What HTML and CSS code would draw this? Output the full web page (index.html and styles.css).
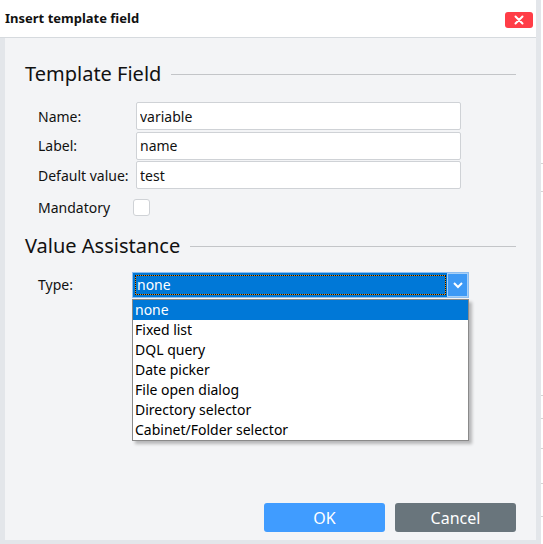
FILE: index.html
```html
<!DOCTYPE html>
<html lang="en">
<head>
    <meta charset="UTF-8">
    <title>Insert template field</title>
    <link rel="stylesheet" href="styles.css">
</head>
<body>
    <div class="dialog">
        <div class="titlebar">
            <span class="title">Insert template field</span>
            <button class="close" type="button">
                <svg width="10" height="10" viewBox="0 0 10 10">
                    <path d="M1.5 1.5 L8.5 8.5 M8.5 1.5 L1.5 8.5" stroke="#fff" stroke-width="2" stroke-linecap="round"/>
                </svg>
            </button>
        </div>
        <div class="frame">
            <div class="panel">
                <div class="section-head">
                    <h2>Template Field</h2>
                    <span class="rule"></span>
                </div>
                <div class="fields">
                    <label for="name">Name:</label>
                    <input id="name" class="input-field" type="text" value="variable">
                    <label for="label">Label:</label>
                    <input id="label" class="input-field" type="text" value="name">
                    <label for="default">Default value:</label>
                    <input id="default" class="input-field" type="text" value="test">
                    <label for="mandatory" class="check-label">Mandatory</label>
                    <span class="checkbox" id="mandatory"></span>
                </div>

                <div class="section-head second">
                    <h2>Value Assistance</h2>
                    <span class="rule"></span>
                </div>
                <div class="type-row">
                    <span class="type-label">Type:</span>
                    <div class="combo">
                        <div class="combo-field">
                            <div class="focus-ring"><span>none</span></div>
                        </div>
                        <div class="combo-button">
                            <svg width="12" height="8" viewBox="0 0 12 8">
                                <path d="M2 2 L6 6 L10 2" fill="none" stroke="#fff" stroke-width="2"/>
                            </svg>
                        </div>
                        <ul class="combo-list">
                            <li class="selected">none</li>
                            <li>Fixed list</li>
                            <li>DQL query</li>
                            <li>Date picker</li>
                            <li>File open dialog</li>
                            <li>Directory selector</li>
                            <li>Cabinet/Folder selector</li>
                        </ul>
                    </div>
                </div>

                <div class="actions">
                    <button type="button" class="button ok">OK</button>
                    <button type="button" class="button cancel">Cancel</button>
                </div>
            </div>
        </div>
    </div>
    <div class="behind">
        <span style="top: 163px"></span>
        <span style="top: 191px"></span>
        <span style="top: 395px"></span>
        <span style="top: 418px"></span>
        <span style="top: 448px"></span>
        <span style="top: 483px"></span>
        <span style="top: 516px"></span>
    </div>
</body>
</html>
```

FILE: styles.css
```css
body {
    margin: 0;
    display: flex;
    background-color: #fff;
    font-family: 'Noto Sans', 'Open Sans', sans-serif;
    color: #111;
    overflow: hidden;
}
.dialog {
    width: 536px;
    height: 540px;
    padding: 0 5px 4px 0;
    background-color: #e3e6ea; /* frame colour */
    display: flex;
    flex-direction: column;
}
.titlebar {
    height: 37px;
    background-color: #fff;
    border-bottom: 1px solid #d6dade;
    display: flex;
    align-items: center;
    justify-content: space-between;
    padding: 0 3px 0 5px;
}
.title {
    font-weight: bold;
    font-size: 13px;
    color: #111;
    margin-top: -1px;
}
.close {
    width: 28px;
    height: 16px;
    border: none;
    border-radius: 3px;
    background-color: #ff3d47;
    padding: 0;
    display: flex;
    align-items: center;
    justify-content: center;
    margin-top: 2px;
}
.frame {
    flex: 1;
    padding-left: 5px;
    display: flex;
}
.panel {
    flex: 1;
    background-color: #f3f4f6;
    padding: 20px 20px 8px 20px;
    display: flex;
    flex-direction: column;
}
.section-head {
    display: flex;
    align-items: center;
    gap: 10px;
    height: 30px;
}
.section-head h2 {
    margin: 0;
    font-weight: normal;
    font-size: 20px;
    color: #111;
}
.section-head .rule {
    flex: 1;
    height: 1px;
    background-color: #c3c5c8;
    margin-top: 2px;
}
.section-head.second {
    margin-top: 14px;
}
.fields {
    display: grid;
    grid-template-columns: 98px 325px;
    row-gap: 1.5px;
    margin: 14px 0 0 13px;
    align-items: center;
    font-size: 14px;
}
.input-field {
    height: 28px;
    box-sizing: border-box;
    border: 1px solid #cfd2d6;
    border-radius: 2px;
    background-color: #fff;
    padding: 0 3px;
    font-family: inherit;
    font-size: 14px;
    color: #111;
}
.check-label {
    margin-top: 7px;
}
.checkbox {
    width: 17px;
    height: 17px;
    box-sizing: border-box;
    border: 1px solid #cfd2d6;
    border-radius: 3px;
    background-color: #fff;
    margin: 7px 0 0 -3px;
}
.type-row {
    display: flex;
    align-items: center;
    margin: 11px 0 0 13px;
    font-size: 14px;
}
.type-label {
    width: 94px;
}
.combo {
    position: relative;
    display: flex;
    width: 337px;
    height: 26px;
    box-sizing: border-box;
    border: 1px solid #8cbdf0;
    background-color: #0078d7;
}
.combo-field {
    flex: 1;
    padding: 2px 1px 2px 2px;
    display: flex;
}
.focus-ring {
    flex: 1;
    background-color: #e09020; /* shows through the dots */
    display: flex;
}
.focus-ring span {
    flex: 1;
    border: 1px dotted #111;
    background-color: #0078d7;
    background-clip: padding-box;
    color: #fff;
    padding-left: 1px;
    line-height: 18px;
}
.combo-button {
    width: 19px;
    border: 1px solid #a8d0f7;
    background-color: #3d99f5;
    display: flex;
    align-items: center;
    justify-content: center;
}
.combo-list {
    position: absolute;
    top: 26px;
    left: -1px;
    width: 337px;
    box-sizing: border-box;
    margin: 0;
    padding: 0;
    list-style: none;
    background-color: #fff;
    border: 1px solid #8a8a8a;
    box-shadow: 3px 3px 3px rgba(0, 0, 0, 0.25);
    color: #000;
}
.combo-list li {
    height: 20px;
    line-height: 20px;
    padding-left: 2px;
}
.combo-list li.selected {
    background-color: #0078d7;
    color: #fff;
}
.actions {
    margin-top: auto;
    display: flex;
    justify-content: flex-end;
    gap: 10px;
}
.button {
    width: 121px;
    height: 29px;
    border: none;
    border-radius: 3px;
    color: #fff;
    font-family: inherit;
    font-size: 16px;
    cursor: pointer;
}
.button.ok {
    background-color: #409cff;
}
.button.cancel {
    background-color: #69757c;
}
.behind {
    position: relative;
    flex: 1;
    height: 544px;
}
.behind span {
    position: absolute;
    left: 0;
    right: 0;
    height: 1px;
    background-color: #d4d4d4;
}
```
